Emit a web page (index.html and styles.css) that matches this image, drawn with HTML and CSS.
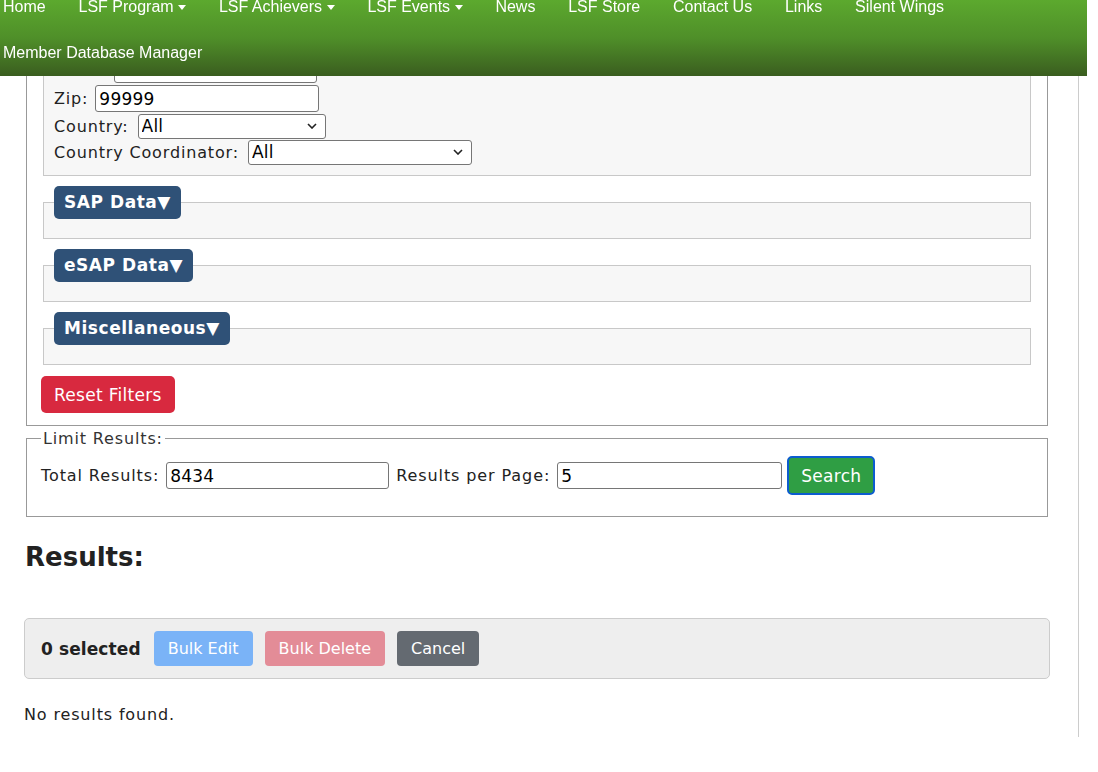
FILE: index.html
```html
<!DOCTYPE html>
<html lang="en">
<head>
<meta charset="utf-8">
<title>Member Database Manager</title>
<link rel="stylesheet" href="styles.css">
</head>
<body>
<nav class="nav">
  <div class="nav-row first">
    <a class="nav-link">Home</a>
    <a class="nav-link">LSF Program <span class="caret"></span></a>
    <a class="nav-link">LSF Achievers <span class="caret"></span></a>
    <a class="nav-link">LSF Events <span class="caret"></span></a>
    <a class="nav-link">News</a>
    <a class="nav-link">LSF Store</a>
    <a class="nav-link">Contact Us</a>
    <a class="nav-link">Links</a>
    <a class="nav-link">Silent Wings</a>
  </div>
  <div class="nav-row second">
    <a class="nav-link">Member Database Manager</a>
  </div>
</nav>

<main class="page">
  <fieldset class="outer">
    <fieldset class="group first-group">
      <div class="field-row"><label>State:</label><input class="text w203" type="text" value="All"></div>
      <div class="field-row"><label>Zip:</label><input class="text w224" type="text" value="99999"></div>
      <div class="field-row select-row"><label>Country:</label><select class="sel w188"><option>All</option></select></div>
      <div class="field-row select-row"><label>Country Coordinator:</label><select class="sel w224"><option>All</option></select></div>
    </fieldset>

    <fieldset class="group">
      <legend class="toggle">SAP Data▼</legend>
    </fieldset>

    <fieldset class="group">
      <legend class="toggle">eSAP Data▼</legend>
    </fieldset>

    <fieldset class="group">
      <legend class="toggle">Miscellaneous▼</legend>
    </fieldset>

    <button class="btn btn-reset" type="button">Reset Filters</button>
  </fieldset>

  <fieldset class="limit">
    <legend class="plain-legend">Limit Results:</legend>
    <div class="limit-row">
      <label>Total Results:</label>
      <input class="text w223" type="text" value="8434">
      <label>Results per Page:</label>
      <input class="text w225" type="text" value="5">
      <button class="btn btn-search" type="button">Search</button>
    </div>
  </fieldset>

  <h2 class="results-title">Results:</h2>

  <div class="bulk-bar">
    <span class="selected-count">0 selected</span>
    <button class="btn btn-bulk btn-edit" type="button">Bulk Edit</button>
    <button class="btn btn-bulk btn-delete" type="button">Bulk Delete</button>
    <button class="btn btn-bulk btn-cancel" type="button">Cancel</button>
  </div>

  <p class="no-results">No results found.</p>
</main>
</body>
</html>
```

FILE: styles.css
```css
* { box-sizing: border-box; }

body {
  margin: 0;
  font-family: "DejaVu Sans", Verdana, sans-serif;
  font-size: 16px;
  letter-spacing: 0.85px;
  color: #222;
  background: #fff;
}

/* ---------- navigation ---------- */
.nav {
  position: fixed;
  top: 0;
  left: 0;
  width: 1087px;
  height: 76px;
  background: linear-gradient(to bottom, #5ca92e 0%, #4f8f29 50%, #3a5d1f 100%);
  font-family: "Liberation Sans", Arial, sans-serif;
  font-size: 16px;
  letter-spacing: 0;
  color: #fff;
  z-index: 10;
}
.nav-row {
  display: flex;
  gap: 32.8px;
  padding-left: 3px;
  height: 45px;
  line-height: 18px;
}
.nav-row.first { margin-top: -2px; }
.nav-row.second { padding-top: 1px; }
.nav-link {
  color: #fff;
  white-space: nowrap;
  display: inline-flex;
  align-items: center;
  align-self: flex-start;
  height: 18px;
  gap: 4px;
}
.caret {
  display: inline-block;
  width: 0;
  height: 0;
  margin-left: 0.5px;
  border-left: 4.5px solid transparent;
  border-right: 4.5px solid transparent;
  border-top: 5px solid #fff;
}

/* ---------- page ---------- */
.page {
  width: 1079px;
  padding: 0 28px 13px 24px;
  border-right: 1px solid #ccc;
}

.outer {
  margin: 0 2px;
  padding: 0 14px 12px;
  border: 1px solid #999;
}
.plain-legend {
  padding: 0 2px;
  font-size: 16px;
  color: #333;
  line-height: 19px;
}

.group {
  margin: 10px 2px 0;
  padding: 0 10px 19px;
  border: 1px solid #c8c8c8;
  background: #f7f7f7;
}
.group.first-group { padding: 43px 10px 10px; }
.toggle {
  background: #2f5177;
  color: #fff;
  font-weight: bold;
  font-size: 17px;
  letter-spacing: 0.55px;
  height: 33px;
  line-height: 33px;
  padding: 0 10px;
  border-radius: 5px;
}

.field-row {
  display: flex;
  align-items: center;
  gap: 7px;
  height: 29px;
}
.field-row.select-row { height: 26px; }
.field-row label { color: #222; }

.text {
  height: 27px;
  padding: 1px 3px;
  border: 1px solid #767676;
  border-radius: 3px;
  font-family: "DejaVu Sans", Verdana, sans-serif;
  font-size: 17px;
  letter-spacing: 0.2px;
  color: #000;
  background: #fff;
}
.sel {
  appearance: none;
  -webkit-appearance: none;
  margin-left: 2px;
  height: 25px;
  padding: 0 20px 0 3px;
  border: 1px solid #767676;
  border-radius: 3px;
  font-family: "DejaVu Sans", Verdana, sans-serif;
  font-size: 17px;
  letter-spacing: 0.2px;
  color: #000;
  background: #fff url("data:image/svg+xml;utf8,<svg xmlns='http://www.w3.org/2000/svg' width='10' height='6' viewBox='0 0 10 6'><path d='M1 1 L5 5 L9 1' fill='none' stroke='%23222' stroke-width='1.6'/></svg>") no-repeat right 8px center;
}
.w188 { width: 188px; }
.w203 { width: 203px; }
.w223 { width: 223px; }
.w224 { width: 224px; }
.w225 { width: 225px; }

.btn {
  font-family: "DejaVu Sans", Verdana, sans-serif;
  color: #fff;
  border: none;
  cursor: pointer;
}
.btn-reset {
  margin-top: 11px;
  height: 37px;
  padding: 0 13px;
  font-size: 17px;
  letter-spacing: 0.3px;
  background: #d8293f;
  border-radius: 5px;
}

/* ---------- limit results ---------- */
.limit {
  margin: 3px 2px 0;
  padding: 8px 14px 21px;
  border: 1px solid #999;
}
.limit-row {
  display: flex;
  align-items: center;
  gap: 7px;
  color: #222;
  letter-spacing: 0.9px;
}
.btn-search {
  margin-left: -2px;
  height: 39px;
  padding: 0 12px;
  font-size: 17px;
  letter-spacing: 0.3px;
  background: #2f9e44;
  border: 2px solid #0c5ccf;
  border-radius: 5px;
}

/* ---------- results ---------- */
.results-title {
  margin: 25px 0 46px 1px;
  font-size: 26px;
  line-height: 30px;
  letter-spacing: 0;
  font-weight: bold;
  color: #222;
}

.bulk-bar {
  display: flex;
  align-items: center;
  gap: 12px;
  height: 61px;
  padding: 0 16px;
  background: #eee;
  border: 1px solid #ccc;
  border-radius: 5px;
}
.selected-count {
  font-weight: bold;
  font-size: 17px;
  letter-spacing: 0.1px;
  color: #222;
  margin-right: 1px;
}
.btn-bulk {
  height: 35px;
  padding: 0 14px;
  font-size: 16px;
  letter-spacing: 0;
  border-radius: 4px;
}
.btn-edit { background: #7ab3f7; }
.btn-delete { background: #e38c97; }
.btn-cancel { background: #646a71; }

.no-results {
  margin: 26px 0 0;
  line-height: 19px;
  color: #222;
}
```
